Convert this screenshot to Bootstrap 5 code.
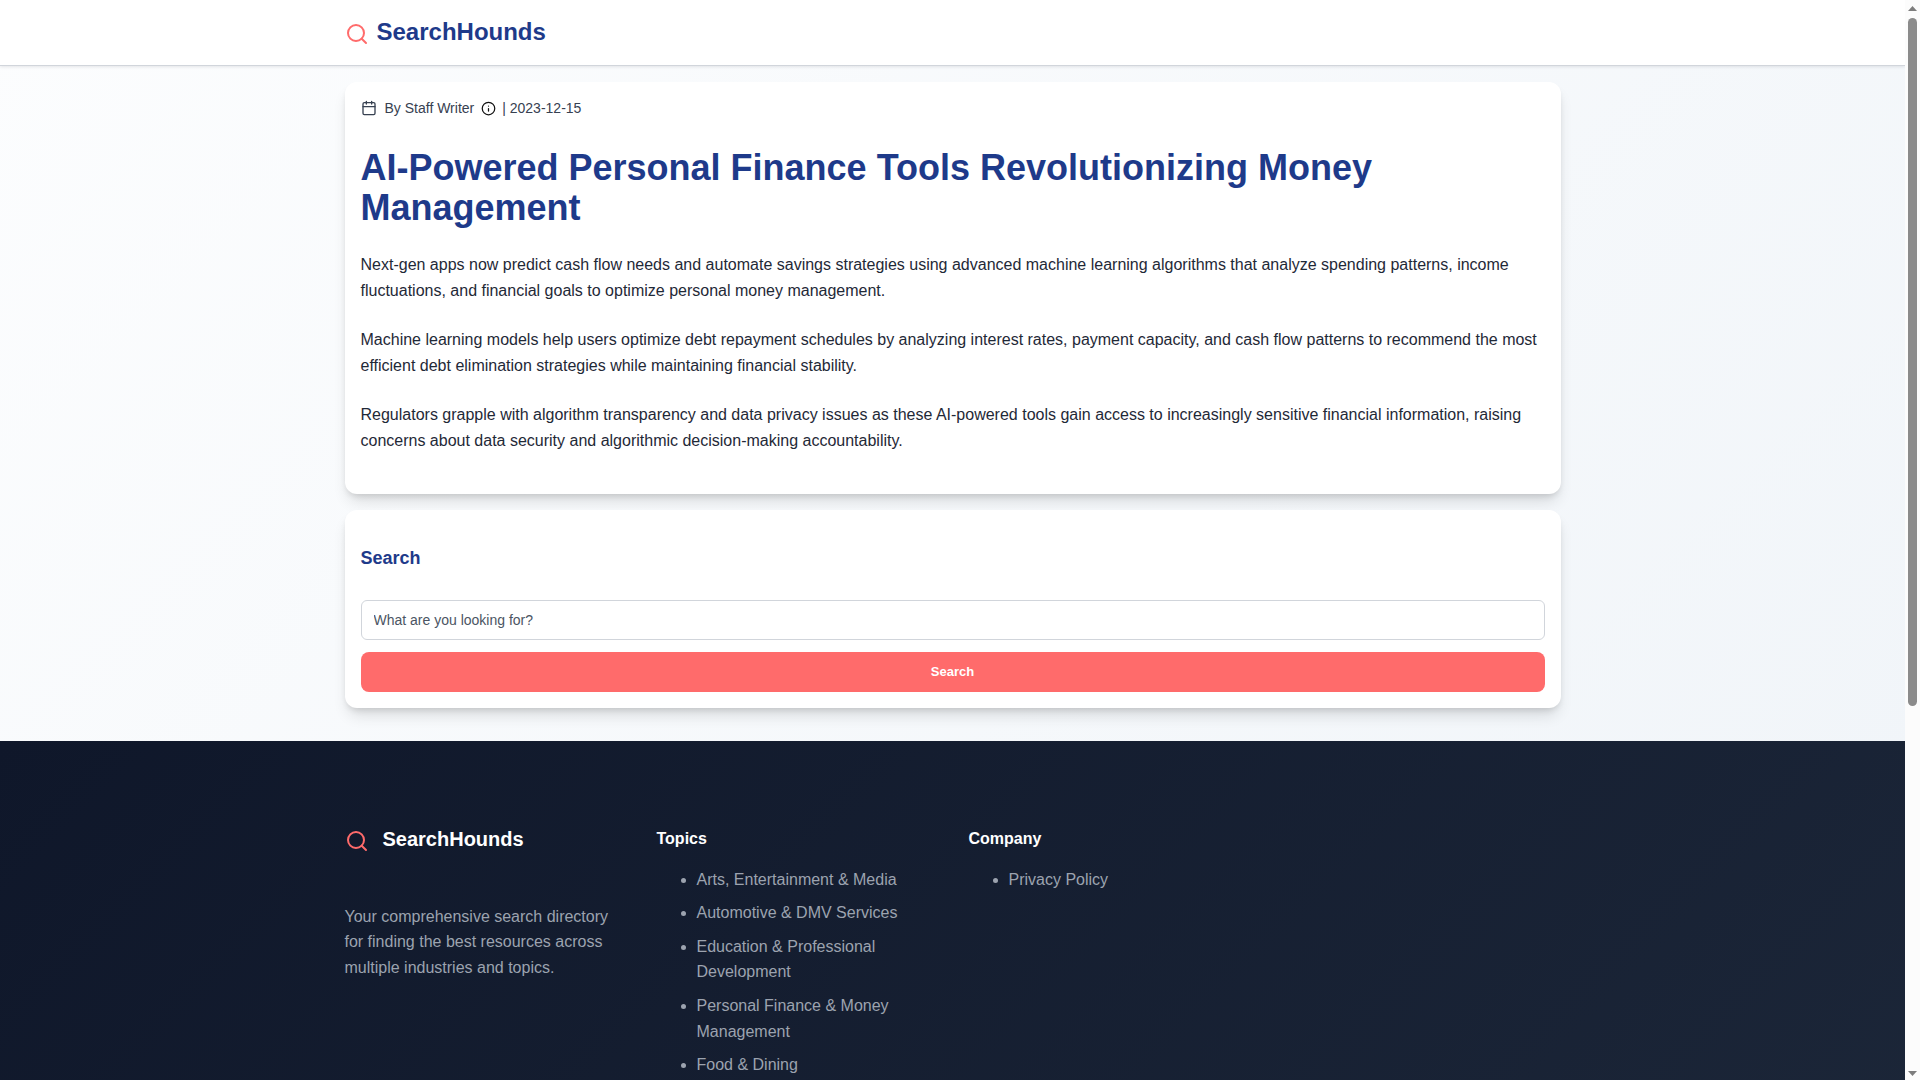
<!DOCTYPE html>
<html lang="en">
<head>
<meta charset="utf-8">
<meta name="viewport" content="width=device-width, initial-scale=1">
<title>AI-Powered Personal Finance Tools Revolutionizing Money Management - SearchHounds</title>
<link href="https://cdn.jsdelivr.net/npm/bootstrap@5.3.0/dist/css/bootstrap.min.css" rel="stylesheet">
<style>
  :root { --navy: #1e3a8a; --coral: #ff6b6b; }
  body { font-family: "Liberation Sans", Arial, sans-serif; font-size: 16px; line-height: 1.6; color: #1f2937; }
  .page-scroll { overflow-y: auto; scrollbar-width: none; background: linear-gradient(135deg, #fcfdfe 0%, #f1f5f9 90%); }
  .page-scroll::-webkit-scrollbar { display: none; }
  .wrap { width: 100%; max-width: 1280px; margin: 0 auto; padding: 0 32px; }
  .stack { padding-top: 16px; padding-bottom: 33px; }

  .site-header { border-bottom: 1px solid #d1d5db; box-shadow: 0 1px 3px rgba(15, 23, 42, .1); padding: 13px 0 14px; }
  .site-header .brand { font-size: 24px; line-height: 38px; color: var(--navy); gap: 8px; }
  .brand svg { color: var(--coral); margin-top: 3px; }

  .panel { background: #fff; border-radius: 12px; padding: 16px; box-shadow: 0 10px 15px -3px rgba(0, 0, 0, .12), 0 4px 6px -2px rgba(0, 0, 0, .12); }
  .byline { font-size: 14px; line-height: 20px; color: #374151; margin-bottom: 30px; }
  .byline .info { margin: 0 6px 0 7px; color: #111; }
  .headline { font-size: 36px; line-height: 40px; color: var(--navy); }
  .panel-title { font-size: 18px; line-height: 28px; color: var(--navy); margin: 18px 0 28px; }
  .search-box { height: 40px; font-size: 14px; border-color: #d1d5db; }
  .search-box::placeholder { color: #4b5563; }
  .btn-coral { --bs-btn-bg: #ff6b6b; --bs-btn-color: #fff; --bs-btn-hover-bg: #f25555; --bs-btn-hover-color: #fff; --bs-btn-active-bg: #e64a4a; --bs-btn-active-color: #fff; height: 40px; font-size: 13px; border: 0; border-radius: 8px; }

  .site-footer { min-height: 903px; padding: 85px 0; background: linear-gradient(135deg, #0f172a 0%, #1e293b 100%); color: #9ca3af; }
  .site-footer .row { --bs-gutter-x: 32px; }
  .site-footer .brand { font-size: 20px; line-height: 26px; gap: 14px; margin-bottom: 51px; }
  .foot-title { font-size: 16px; line-height: 26px; margin-bottom: 15px; }
  .foot-list { padding-left: 40px; }
  .foot-list li { margin-bottom: 8px; }
  .foot-list a { color: inherit; text-decoration: none; }
  .foot-list a:hover { color: #fff; }

  .scroll-rail { width: 15px; background: #fcfcfc; padding: 6px 0 4px; }
  .scroll-thumb { width: 9px; flex: 682; background: #8b8b8b; border-radius: 5px; margin-top: 7px; }
  .scroll-rest { flex: 362; }
</style>
</head>
<body>
<div class="d-flex vh-100 overflow-hidden">
  <div class="page-scroll flex-grow-1">
    <header class="site-header bg-white">
      <div class="wrap d-flex">
        <a href="#" class="brand d-flex align-items-center fw-bold text-decoration-none">
          <svg width="24" height="24" viewBox="0 0 24 24" fill="none" stroke="currentColor" stroke-width="2" stroke-linecap="round" stroke-linejoin="round" aria-hidden="true"><circle cx="11" cy="11" r="8"/><path d="m21 21-4.3-4.3"/></svg>
          <span>SearchHounds</span>
        </a>
      </div>
    </header>

    <main class="wrap stack d-flex flex-column gap-3">
      <article class="panel">
        <div class="byline d-flex align-items-center">
          <svg class="me-2" width="16" height="16" viewBox="0 0 24 24" fill="none" stroke="currentColor" stroke-width="2" stroke-linecap="round" stroke-linejoin="round" aria-hidden="true"><path d="M8 2v4M16 2v4M3 10h18"/><rect x="3" y="4" width="18" height="18" rx="2"/></svg>
          <span>By Staff Writer</span>
          <svg class="info" width="15" height="15" viewBox="0 0 24 24" fill="none" stroke="currentColor" stroke-width="2" stroke-linecap="round" stroke-linejoin="round" aria-hidden="true"><circle cx="12" cy="12" r="10"/><path d="M12 16v-4M12 8h.01"/></svg>
          <span>| 2023-12-15</span>
        </div>
        <h1 class="headline fw-bold mb-4">AI-Powered Personal Finance Tools Revolutionizing Money Management</h1>
        <p class="mb-4">Next-gen apps now predict cash flow needs and automate savings strategies using advanced machine learning algorithms that analyze spending patterns, income fluctuations, and financial goals to optimize personal money management.</p>
        <p class="mb-4">Machine learning models help users optimize debt repayment schedules by analyzing interest rates, payment capacity, and cash flow patterns to recommend the most efficient debt elimination strategies while maintaining financial stability.</p>
        <p class="mb-4">Regulators grapple with algorithm transparency and data privacy issues as these AI-powered tools gain access to increasingly sensitive financial information, raising concerns about data security and algorithmic decision-making accountability.</p>
      </article>

      <section class="panel">
        <h2 class="panel-title fw-bold"><label for="q">Search</label></h2>
        <form class="d-flex flex-column" onsubmit="return false">
          <input id="q" type="search" class="form-control search-box mb-2" placeholder="What are you looking for?">
          <button type="submit" class="btn btn-coral fw-bold w-100 mt-1">Search</button>
        </form>
      </section>
    </main>

    <footer class="site-footer">
      <div class="wrap">
        <div class="row">
          <div class="col-3">
            <div class="brand d-flex align-items-center fw-bold text-white">
              <svg width="24" height="24" viewBox="0 0 24 24" fill="none" stroke="currentColor" stroke-width="2" stroke-linecap="round" stroke-linejoin="round" aria-hidden="true"><circle cx="11" cy="11" r="8"/><path d="m21 21-4.3-4.3"/></svg>
              <span>SearchHounds</span>
            </div>
            <p>Your comprehensive search directory for finding the best resources across multiple industries and topics.</p>
          </div>
          <div class="col-3">
            <h3 class="foot-title fw-bold text-white">Topics</h3>
            <ul class="foot-list">
              <li><a href="#">Arts, Entertainment &amp; Media</a></li>
              <li><a href="#">Automotive &amp; DMV Services</a></li>
              <li><a href="#">Education &amp; Professional Development</a></li>
              <li><a href="#">Personal Finance &amp; Money Management</a></li>
              <li><a href="#">Food &amp; Dining</a></li>
            </ul>
          </div>
          <div class="col-3">
            <h3 class="foot-title fw-bold text-white">Company</h3>
            <ul class="foot-list">
              <li><a href="#">Privacy Policy</a></li>
            </ul>
          </div>
        </div>
      </div>
    </footer>
  </div>

  <div class="scroll-rail flex-shrink-0 d-flex flex-column align-items-center" aria-hidden="true">
    <svg width="9" height="5" viewBox="0 0 9 5"><path d="M0 5 4.5 0 9 5z" fill="#7d7d7d"/></svg>
    <div class="scroll-thumb"></div>
    <div class="scroll-rest"></div>
    <svg width="9" height="5" viewBox="0 0 9 5"><path d="M0 0h9L4.5 5z" fill="#7d7d7d"/></svg>
  </div>
</div>
<script src="https://cdn.jsdelivr.net/npm/bootstrap@5.3.0/dist/js/bootstrap.bundle.min.js"></script>
</body>
</html>
